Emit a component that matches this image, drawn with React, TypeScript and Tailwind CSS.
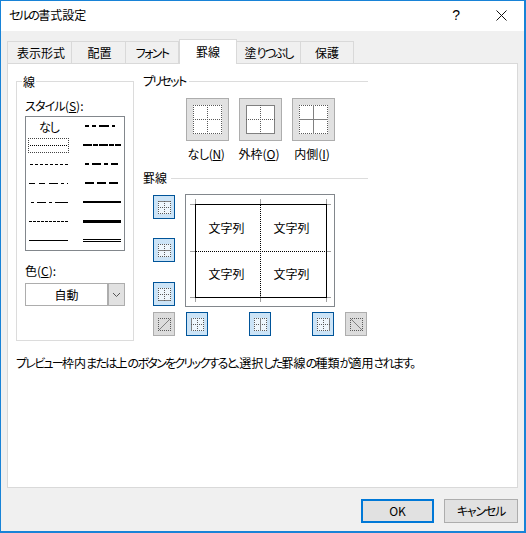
import React from "react";

const BOX = 13;

function J({ text }: { text: string }) {
  const parts = text.split(/([\u3040-\u30ffー、。]+)/);
  return (
    <>
      {parts.map((p, i) =>
        i % 2 === 1 ? (
          <span key={i} className="tracking-[-1.7px]">
            {p}
          </span>
        ) : (
          <span key={i}>{p}</span>
        ),
      )}
    </>
  );
}

function Glyph({ size, solid, diag }: { size: number; solid: string[]; diag?: "up" | "down" }) {
  const s = size - 0.5;
  const m = Math.floor(size / 2) + 0.5;
  const seg: Record<string, number[]> = {
    top: [0, 0.5, size, 0.5],
    bottom: [0, s, size, s],
    left: [0.5, 0, 0.5, size],
    right: [s, 0, s, size],
    h: [0, m, size, m],
    v: [m, 0, m, size],
  };
  return (
    <svg width={size} height={size} shapeRendering="crispEdges" className="block">
      {Object.entries(seg)
        .filter(([k]) => !(diag && (k === "h" || k === "v")))
        .map(([k, [x1, y1, x2, y2]]) => (
          <line
            key={k}
            x1={x1}
            y1={y1}
            x2={x2}
            y2={y2}
            stroke={solid.includes(k) ? "#808080" : "#5a5a5a"}
            strokeDasharray={solid.includes(k) ? undefined : "1 1"}
            strokeWidth={1}
          />
        ))}
      {diag === "up" && <line x1={1} y1={size - 1} x2={size - 1} y2={1} stroke="#808080" shapeRendering="auto" />}
      {diag === "down" && <line x1={1} y1={1} x2={size - 1} y2={size - 1} stroke="#808080" shapeRendering="auto" />}
    </svg>
  );
}

function BorderBtn({ solid, className }: { solid: string[]; className?: string }) {
  return (
    <div className={`w-[22px] h-[24px] flex items-center justify-center bg-[#cce4f7] border border-[#005499] ${className ?? ""}`}>
      <div className="bg-[#eef6fc]">
        <Glyph size={BOX} solid={solid} />
      </div>
    </div>
  );
}

function DiagBtn({ dir, className }: { dir: "up" | "down"; className?: string }) {
  return (
    <div className={`w-[22px] h-[24px] flex items-center justify-center bg-[#dcdcdc] border border-[#adadad] ${className ?? ""}`}>
      <Glyph size={BOX} solid={[]} diag={dir} />
    </div>
  );
}

function Preset({ solid, label, ml }: { solid: string[]; label: React.ReactNode; ml?: string }) {
  return (
    <div className={`w-[43px] flex flex-col items-center ${ml ?? ""}`}>
      <div className="w-[43px] h-[43px] flex items-center justify-center bg-[#e1e1e1] border border-[#adadad]">
        <div className="bg-white w-[29px] h-[29px]">
          <Glyph size={29} solid={solid} />
        </div>
      </div>
      <div className="mt-[4px] mr-[3px] h-[18px] leading-[18px] whitespace-nowrap">{label}</div>
    </div>
  );
}

type S = { dash?: string; w: number; double?: boolean; x1: number; x2: number };

function Sample({ dash, w, double, x1, x2 }: S) {
  const y = w === 2 ? 9 : 9.5;
  return (
    <svg width={49} height={19} className="block" shapeRendering="crispEdges">
      {double ? (
        <>
          <line x1={x1} x2={x2} y1={8.5} y2={8.5} stroke="#000" />
          <line x1={x1} x2={x2} y1={10.5} y2={10.5} stroke="#000" />
        </>
      ) : (
        <line x1={x1} x2={x2} y1={y} y2={y} stroke="#000" strokeWidth={w} strokeDasharray={dash} />
      )}
    </svg>
  );
}

const leftLines: S[] = [
  { w: 1, dash: "1 1", x1: 4, x2: 42 },
  { w: 1, dash: "3 2", x1: 4, x2: 42 },
  { w: 1, dash: "6 4 6 4 9 3 3 3", x1: 3, x2: 42 },
  { w: 1, dash: "3 3 9 3 3 3 13 3 2", x1: 5, x2: 42 },
  { w: 1, dash: "3 1", x1: 3, x2: 42 },
  { w: 1, x1: 3, x2: 42 },
];
const rightLines: S[] = [
  { w: 2, dash: "4 3 4 3 10 3 3 3 3", x1: 10, x2: 43 },
  { w: 2, dash: "9 1 5 1", x1: 8, x2: 46 },
  { w: 2, dash: "4 3 9 3 4 3 10", x1: 10, x2: 43 },
  { w: 2, dash: "9 3", x1: 10, x2: 43 },
  { w: 2, x1: 8, x2: 46 },
  { w: 3, x1: 8, x2: 46 },
  { w: 1, double: true, x1: 8, x2: 46 },
];

function Header({ title }: { title: string }) {
  return (
    <div className="flex items-center h-[18px]">
      <span className="leading-[18px]">
        <J text={title} />
      </span>
      <div className="h-px flex-1 bg-[#dcdcdc] ml-[4px]" />
    </div>
  );
}

const tabs = [
  { t: "表示形式", w: "w-[65px] pl-[3px]" },
  { t: "配置", w: "w-[54px] pl-[2px]" },
  { t: "フォント", w: "w-[53px]" },
  { t: "罫線", w: "w-[58px]", active: true },
  { t: "塗りつぶし", w: "w-[64px]" },
  { t: "保護", w: "w-[53px]" },
];

function Cell() {
  return <div className="flex items-center justify-center pr-[4px]">文字列</div>;
}

export default function App() {
  return (
    <div className="w-[526px] h-[533px] flex flex-col bg-[#f0f0f0] border border-r-2 border-b-2 border-[#1883d7] font-['Noto_Sans_CJK_JP',sans-serif] [font-feature-settings:'palt'] text-[12px] text-black overflow-hidden">
      {/* title bar */}
      <div className="h-[30px] shrink-0 bg-white flex items-center pl-[8px] pb-[2px]">
        <span className="flex-1 leading-[28px]">
          <J text="セルの書式設定" />
        </span>
        <span className="font-['Liberation_Sans',sans-serif] text-[14px] mr-[36px]">?</span>
        <svg width="11" height="11" className="mr-[17px]">
          <path d="M0.5 0.5L10.5 10.5M10.5 0.5L0.5 10.5" stroke="#111" fill="none" />
        </svg>
      </div>

      {/* tabs */}
      <div className="flex items-end h-[32px] shrink-0 pl-[6px] relative z-10">
        {tabs.map((tab) =>
          tab.active ? (
            <div key={tab.t} className={`${tab.w} h-[25px] mb-[-1px] bg-white border border-b-0 border-[#d9d9d9] flex items-center justify-center`}>
              <J text={tab.t} />
            </div>
          ) : (
            <div key={tab.t} className={`${tab.w} h-[22px] bg-[#f0f0f0] border border-b-0 border-l-0 first:border-l border-[#d9d9d9] flex items-center justify-center`}>
              <J text={tab.t} />
            </div>
          ),
        )}
      </div>

      {/* panel */}
      <div className="ml-[6px] w-[511px] h-[425px] shrink-0 bg-white border border-[#d9d9d9] flex flex-col pl-[8px] pt-[8px]">
        <div className="flex h-[281px]">
          {/* 線 group */}
          <div className="w-[118px] h-[260px] mt-[9px] border border-[#dcdcdc] relative pl-[8px] pt-[15px]">
            <span className="absolute left-[5px] top-[-9px] h-[18px] leading-[18px] bg-white px-px">線</span>
            <div className="h-[18px] leading-[18px]">
              <span className="tracking-[-0.8px]">スタイル</span>(<u>S</u>):
            </div>
            <div className="mt-[1px] w-[100px] h-[135px] border border-[#82878c] flex">
              <div className="w-[49px] relative pt-[19px]">
                <span className="absolute left-[13px] top-[1px] h-[18px] leading-[18px] tracking-[-1px]">なし</span>
                <div className="absolute left-[2px] top-[21px] w-[41px] h-[15px] border border-dotted border-[#444]" />
                {leftLines.map((l, i) => (
                  <Sample key={i} {...l} />
                ))}
              </div>
              <div className="w-[49px]">
                {rightLines.map((l, i) => (
                  <Sample key={i} {...l} />
                ))}
              </div>
            </div>
            <div className="mt-[11px] h-[18px] leading-[18px]">色(<u>C</u>):</div>
            <div className="mt-[3px] w-[100px] h-[23px] bg-white border border-[#adadad] flex">
              <div className="flex-1 flex items-center justify-center">自動</div>
              <div className="w-[17px] bg-[#e1e1e1] border-l-2 border-[#adadad] flex items-center justify-center">
                <svg width="9" height="6">
                  <path d="M1 1L4.5 4.5L8 1" stroke="#555" fill="none" />
                </svg>
              </div>
            </div>
          </div>

          {/* right column */}
          <div className="ml-[9px] w-[225px]">
            <Header title="プリセット" />
            <div className="flex mt-[8px] pl-[43px]">
              <Preset solid={[]} label={<span className="tracking-[-0.3px]">なし(<u>N</u>)</span>} />
              <Preset solid={["top", "bottom", "left", "right"]} label={<>外枠(<u>O</u>)</>} ml="ml-[10px]" />
              <Preset solid={["h", "v"]} label={<>内側(<u>I</u>)</>} ml="ml-[10px]" />
            </div>
            <div className="mt-[6px]">
              <Header title="罫線" />
            </div>
            <div className="flex mt-[7px] ml-[10px]">
              <div className="w-[22px] flex flex-col pt-[1px]">
                <BorderBtn solid={["top"]} />
                <BorderBtn solid={["h"]} className="mt-[19px]" />
                <BorderBtn solid={["bottom"]} className="mt-[20px]" />
              </div>
              <div className="relative ml-[10px] w-[150px] h-[113px] border border-[#82878c] bg-white pl-[9px] pt-[9px]">
                <svg width="150" height="113" className="absolute left-[-1px] top-[-1px]" shapeRendering="crispEdges">
                  <path
                    d="M5 10.5H15M10.5 5V15M136 10.5H146M141.5 5V15M5 103.5H15M10.5 98V108M136 103.5H146M141.5 98V108M75.5 5V11M75.5 98V108M5 57.5H11M141 57.5H146"
                    stroke="#a0a0a0"
                    fill="none"
                  />
                </svg>
                <div className="relative w-[132px] h-[94px] border border-black grid grid-cols-2 grid-rows-2">
                  <svg width="130" height="92" className="absolute left-0 top-0" shapeRendering="crispEdges">
                    <path d="M0 46.5H130M64.5 0V92" stroke="#000" strokeDasharray="1 1" fill="none" />
                  </svg>
                  <Cell />
                  <Cell />
                  <Cell />
                  <Cell />
                </div>
              </div>
            </div>
            <div className="flex mt-[5px] ml-[10px]">
              <DiagBtn dir="up" />
              <BorderBtn solid={["left"]} className="ml-[11px]" />
              <BorderBtn solid={["v"]} className="ml-[41px]" />
              <BorderBtn solid={["right"]} className="ml-[41px]" />
              <DiagBtn dir="down" className="ml-[11px]" />
            </div>
          </div>
        </div>
        <div className="mt-[1px] h-[18px] leading-[18px]">
          <J text="プレビュー枠内または上のボタンをクリックすると、選択した罫線の種類が適用されます。" />
        </div>
      </div>

      {/* footer */}
      <div className="flex justify-end pr-[6px] mt-[11px]">
        <div className="w-[73px] h-[24px] bg-[#e1e1e1] border-2 border-[#0078d7] flex items-center justify-center">OK</div>
        <div className="ml-[10px] w-[74px] h-[24px] bg-[#e1e1e1] border border-[#adadad] flex items-center justify-center tracking-[-1.2px]">キャンセル</div>
      </div>
    </div>
  );
}
